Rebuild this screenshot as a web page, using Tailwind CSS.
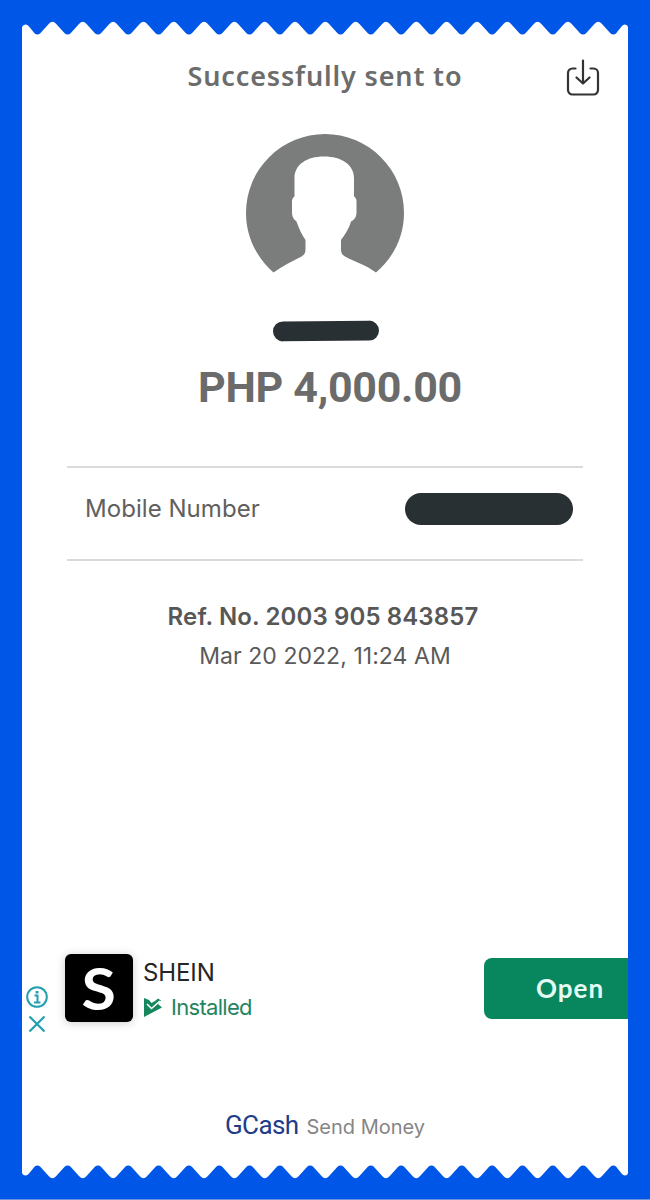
<!DOCTYPE html>
<html lang="en">

<head>
    <meta charset="UTF-8">
    <meta name="viewport" content="width=device-width, initial-scale=1.0">
    <title>GCash - Send Money</title>
    <!-- Tailwind CSS CDN -->
    <script src="https://cdn.jsdelivr.net/npm/@tailwindcss/browser@4"></script>
</head>

<body class="bg-[#0057e7]">
    <div class="w-[650px] h-[1200px] px-[22px] pt-5 overflow-hidden border-b border-[#6b93dd]">

        <!-- Torn edge, top -->
        <svg class="block w-[606px] h-4" viewBox="0 0 606 16" fill="#fff">
            <path class="edge" />
        </svg>

        <main class="h-[1128px] bg-white flex flex-col">
            <header class="relative h-[82px] pt-5 text-center">
                <h1 class="font-['Noto_Sans'] font-semibold text-[27px] leading-10 tracking-[0.85px] text-[#6c6c6c]">Successfully sent to</h1>
                <!-- Download -->
                <svg class="absolute left-[544px] top-[22px] w-[34px] h-10" viewBox="0 0 34 40" fill="none" stroke="#353233" stroke-width="2.2" stroke-linecap="round" stroke-linejoin="round">
                    <path d="M9.500 10.500H6.500a4.500 4.500 0 0 0-4.500 4.500V32a4.500 4.500 0 0 0 4.500 4.500H27.500a4.500 4.500 0 0 0 4.500-4.500V15a4.500 4.500 0 0 0-4.500-4.500H24.500" />
                    <path d="M17 2.500V25.500M10.500 19.500L17 25.500L23.500 19.500" />
                </svg>
            </header>

            <section class="flex flex-col items-center pt-4">
                <svg class="w-[158px] h-[140px]" viewBox="0 0 158 140">
                    <path fill="#7b7c7c" d="M27.500 138.500C10 123 0 102 0 79a79 79 0 0 1 158 0c0 23-10 44-28 59.500C120 131 109 128 99 122.500c-3-2-4-3.500-4-7V106c3-4 8-11 10-18.500 4-2 5.500-5 5.500-9V68c0-3-.5-4-2.500-5.500V44c0-13-12-21.500-30-21.500S48.500 31 48.500 44v18.500c-2 1.500-2.500 2.500-2.500 5.500v10.500c0 4 1.500 7 4.500 9C53 95 56 101 59.500 106v9.500c0 3.500-1 5-4 7C47 127 36 132 27.500 138.500z" />
                </svg>
                <div class="mt-[47px] ml-0.5 w-[106px] h-5 rounded-full bg-[#293034] rotate-[-0.5deg]"></div>
                <p class="mt-[21px] ml-2.5 font-[Roboto] font-bold text-[43px] leading-[50px] tracking-[-0.3px] text-[#6b6b6b]">PHP 4,000.00</p>
            </section>

            <section class="mt-[54px] ml-[45px] w-[516px] h-[95px] flex items-center justify-between border-y-2 border-[#dadada] pl-[18px] pr-2.5 pb-[9px]">
                <span class="font-[Inter] text-2xl tracking-[0.05px] text-[#606060]">Mobile Number</span>
                <span class="w-[168px] h-8 rounded-full bg-[#293034]"></span>
            </section>

            <section class="mt-9 text-center text-[#5a5a5a]">
                <p class="-ml-1 font-[Inter] font-semibold text-2xl leading-10 tracking-[0.12px] text-[#575757]">Ref. No. 2003 905 843857</p>
                <p class="font-[Inter] text-[23px] leading-[38px] tracking-[0.05px]">Mar 20 2022, 11:24 AM</p>
            </section>

            <!-- Ad banner -->
            <section class="mt-[279px] h-[72px] flex items-start">
                <div class="w-[43px] pt-[31px] pl-[3px]">
                    <svg class="w-6 h-[50px]" viewBox="0 0 24 50" fill="none" stroke="#249fb0" stroke-width="2">
                        <circle cx="12" cy="12" r="9.800" />
                        <path d="M9.500 10.500H12.500V17M9 17.500H15.500" />
                        <path stroke-width="2.800" d="M12 6V8.500" />
                        <path stroke-width="2.200" d="M4.500 31.500L19.500 46.500M19.500 31.500L4.500 46.500" />
                    </svg>
                </div>
                <div class="w-[68px] h-[68px] rounded-md bg-black shadow-[0_1px_10px_#0003] flex items-center justify-center font-[Lato] font-bold text-[57px] leading-none text-white"><span class="scale-x-110">S</span></div>
                <div class="ml-2.5 w-[341px]">
                    <p class="pt-px font-[Inter] text-2xl leading-9 tracking-[-0.1px] text-[#252525]">SHEIN</p>
                    <p class="flex items-center font-[Inter] text-[22px] leading-8 tracking-[-0.7px] text-[#25845f]">
                        <svg class="w-5 h-5 mr-2" viewBox="0 0 20 20">
                            <path fill="#16875d" d="M1 1L6 3L8.500 6L12 4L15 1.500L18 3.500L15 7L19 10.500L1 20z" />
                            <path fill="none" stroke="#fff" stroke-width="1.600" d="M4 7L8.500 11.500L17 4" />
                        </svg>
                        Installed
                    </p>
                </div>
                <button class="mt-1 flex-1 h-[61px] pl-7 rounded-l-lg bg-[#08875f] font-[Lato] font-bold text-[26px] text-[#e6fbf3] tracking-[1px]">Open</button>
            </section>

            <footer class="mt-[81px] flex items-baseline justify-center">
                <span class="font-[Roboto] text-[26px] leading-9 tracking-[-0.6px] text-[#1f3c88]">GCash</span>
                <span class="ml-2 font-[Inter] text-xl text-[#858585]">Send Money</span>
            </footer>
        </main>

        <!-- Torn edge, bottom -->
        <svg class="block w-[606px] h-4" viewBox="0 0 606 16" fill="#fff">
            <g transform="matrix(1 0 0 -1 0 16)">
                <path class="edge" />
            </g>
        </svg>
    </div>

    <script>
        // one tooth, from valley to valley
        const tooth = 'q1.8 0 3 -1.3l8.6 -9.5q3.56 -4 7.12 0l8.6 9.5q1.2 1.3 3 1.3';
        const d = 'M0 16V7Q1 4.5 3.5 4.5Q5.5 4.5 7 6.5L12.5 13.2Q13.7 14.5 15.3 14.5'
            + tooth.repeat(19)
            + 'Q593 14.5 594.2 13.2L599.5 6.5Q601 4.5 603 4.5Q605.5 4.5 606 7V16z';

        document.querySelectorAll('.edge').forEach((path) => {
            path.setAttribute('d', d);
        });
    </script>
</body>

</html>
